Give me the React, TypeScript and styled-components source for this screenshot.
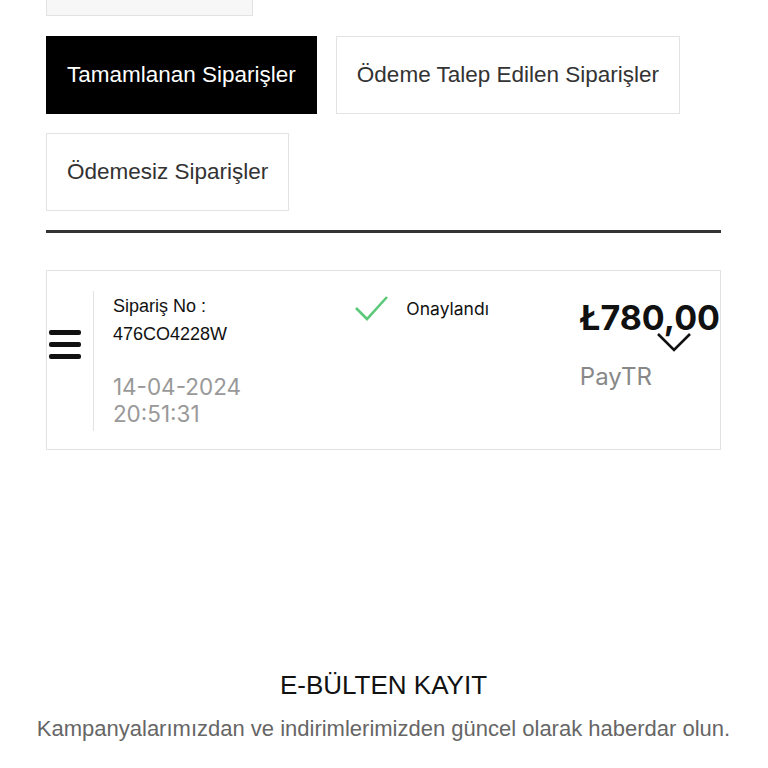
import styled, { createGlobalStyle } from "styled-components";

const GlobalStyle = createGlobalStyle`
  body {
    margin: 0;
    background: #fff;
    font-family: "Liberation Sans", Arial, sans-serif;
    color: #222;
  }
`;

const Page = styled.div`
  width: 768px;
  height: 768px;
  overflow: hidden;
  padding: 0 47px 0 46px;
  box-sizing: border-box;
`;

const PrevButton = styled.div`
  width: 207px;
  height: 16px;
  box-sizing: border-box;
  background: #f7f7f7;
  border: 1px solid #e3e3e3;
  border-top: none;
`;

const Tabs = styled.div`
  display: flex;
  flex-wrap: wrap;
  gap: 19px;
  margin-top: 20px;
`;

const Tab = styled.button<{ $active?: boolean }>`
  height: 78px;
  padding: 0 20px;
  box-sizing: border-box;
  border: 1px solid ${p => (p.$active ? "#000" : "#e3e3e3")};
  background: ${p => (p.$active ? "#000" : "#fff")};
  color: ${p => (p.$active ? "#fff" : "#333")};
  font-family: "Liberation Sans", Arial, sans-serif;
  font-size: 22.5px;
  cursor: pointer;
`;

const Divider = styled.div`
  height: 3px;
  background: #333;
  margin-top: 19px;
`;

const OrderCard = styled.div`
  margin-top: 37px;
  height: 180px;
  box-sizing: border-box;
  border: 1px solid #e2e2e2;
  display: flex;
  align-items: stretch;
  padding: 20px 0 18px 0;
`;

const MenuCol = styled.div`
  width: 46px;
  padding-top: 37px;
`;

const Details = styled.div`
  width: 243px;
  border-left: 1px solid #e2e2e2;
  padding-left: 19px;
  display: flex;
  flex-direction: column;
`;

const OrderLabel = styled.div`
  font-size: 18px;
  line-height: 28px;
  margin-top: 1px;
  color: #111;
`;

const DateText = styled.div`
  margin-top: 25px;
  font-family: "Inter", sans-serif;
  font-size: 22.5px;
  line-height: 27px;
  color: #999;
`;

const Status = styled.div`
  width: 225px;
  display: flex;
  align-items: flex-start;
  gap: 17px;
  padding-top: 4px;
`;

const StatusText = styled.span`
  font-family: "Inter", sans-serif;
  font-size: 17.5px;
  color: #111;
  margin-top: 3px;
`;

const PriceCol = styled.div`
  display: flex;
  flex-direction: column;
  white-space: nowrap;
`;

const Price = styled.div`
  font-family: "Inter", sans-serif;
  font-weight: 700;
  font-size: 34px;
  line-height: 40px;
  margin-top: 7px;
  color: #111;
`;

const Chevron = styled.svg`
  margin: -6px 0 0 77px;
`;

const Provider = styled.div`
  font-family: "Inter", sans-serif;
  font-size: 24px;
  color: #888;
  margin-top: 10px;
`;

const Newsletter = styled.div`
  margin-top: 220px;
  text-align: center;
`;

const NewsTitle = styled.div`
  font-size: 26px;
  color: #111;
`;

const NewsText = styled.div`
  margin: 15px -40px 0 -40px;
  font-size: 22px;
  color: #666;
`;

function Hamburger() {
  return (
    <svg width="34" height="32" viewBox="0 0 34 32">
      <rect x="2" y="2" width="32" height="5" rx="2" fill="#111" />
      <rect x="2" y="14" width="32" height="5" rx="2" fill="#111" />
      <rect x="2" y="26" width="32" height="5" rx="2" fill="#111" />
    </svg>
  );
}

export default function App() {
  return (
    <>
      <GlobalStyle />
      <Page>
        <PrevButton />
        <Tabs>
          <Tab $active>Tamamlanan Siparişler</Tab>
          <Tab>Ödeme Talep Edilen Siparişler</Tab>
          <Tab>Ödemesiz Siparişler</Tab>
        </Tabs>
        <Divider />
        <OrderCard>
          <MenuCol>
            <Hamburger />
          </MenuCol>
          <Details>
            <OrderLabel>
              Sipariş No :
              <br />
              476CO4228W
            </OrderLabel>
            <DateText>
              14-04-2024
              <br />
              20:51:31
            </DateText>
          </Details>
          <Status>
            <svg width="34" height="28" viewBox="0 0 34 28">
              <polyline points="1,13 12,24 32,2" fill="none" stroke="#5cc97a" strokeWidth="2.6" />
            </svg>
            <StatusText>Onaylandı</StatusText>
          </Status>
          <PriceCol>
            <Price>Ł780,00</Price>
            <Chevron width="34" height="20" viewBox="0 0 34 20">
              <polyline points="1,2 17,18 33,2" fill="none" stroke="#111" strokeWidth="2.6" />
            </Chevron>
            <Provider>PayTR</Provider>
          </PriceCol>
        </OrderCard>
        <Newsletter>
          <NewsTitle>E-BÜLTEN KAYIT</NewsTitle>
          <NewsText>Kampanyalarımızdan ve indirimlerimizden güncel olarak haberdar olun.</NewsText>
        </Newsletter>
      </Page>
    </>
  );
}
